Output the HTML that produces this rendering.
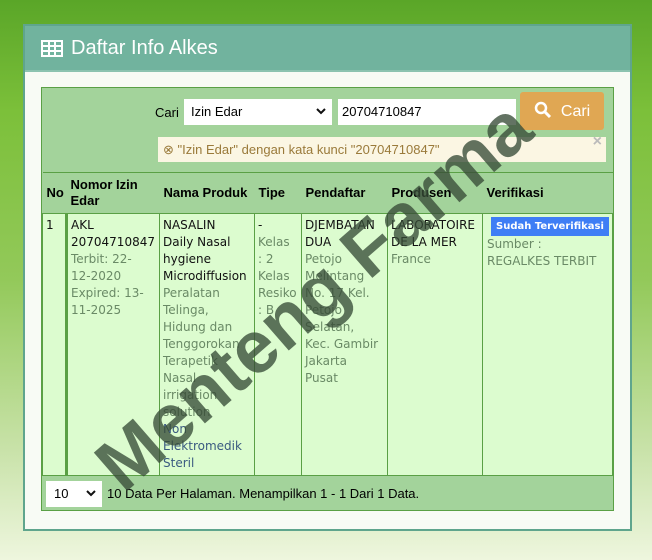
<!DOCTYPE html>
<html><head><meta charset="utf-8"><style>
*{box-sizing:border-box}
body{margin:0;width:652px;height:560px;overflow:hidden;position:relative;font-family:"Liberation Sans",sans-serif;
background:linear-gradient(180deg,#5aa628 0%,#7cc03a 20%,#93c95a 50%,#c8e2a8 80%,#eef6de 100%);}
.panel{position:absolute;left:23px;top:24px;width:609px;height:507px;background:#f8fbf5;border:2px solid #5fa58d;}
.hd{height:46px;background:#71b39e;color:#fff;font-size:20px;padding:11px 0 0 16px;border-bottom:2px solid #8cc3b0}
.hd svg{vertical-align:-3px;margin-right:8px}
.box{position:absolute;left:16px;top:61px;width:573px;height:424px;border:1px solid #5aa045;background:#a3d39b}
.cell{position:absolute;font-size:12px;}
table{position:absolute;left:0;top:84px;width:571px;border-collapse:collapse;table-layout:fixed}
th{font-size:13px;text-align:left;font-weight:bold;padding:2px 4px;height:41px;border-top:1px solid #5aa045;line-height:16px}
td{background:#dcfccf;vertical-align:top;font-family:"DejaVu Sans",sans-serif;font-size:12px;line-height:17px;padding:3px 3px;border:1px solid #5aa045;color:#111;height:262px;white-space:nowrap;overflow:hidden}
.g{color:#6a8a66}
.wm{position:absolute;left:132px;top:428px;font:bold 74px/76px "Liberation Sans",sans-serif;color:rgba(55,75,55,0.78);transform:rotate(-41deg);transform-origin:0 100%;white-space:nowrap}
.chev{position:absolute;right:6px;top:9px}
</style></head><body>
<div class="panel">
<div class="hd"><svg width="22" height="17" viewBox="0 0 22 17"><rect x="1" y="1" width="20" height="15" fill="none" stroke="#fff" stroke-width="2"/><path d="M1 6h20M1 11h20M8 1v15M14 1v15" stroke="#fff" stroke-width="2"/></svg>Daftar Info Alkes</div>
<div class="box">
<div class="cell" style="left:113px;top:17px;font-size:13px">Cari</div>
<div class="cell" style="left:142px;top:11px;width:148px;height:26px;background:#fff;font-size:13px;padding:5px 7px">Izin Edar<svg class="chev" width="10" height="7" viewBox="0 0 10 7"><path d="M1 1l4 4 4-4" fill="none" stroke="#111" stroke-width="2"/></svg></div>
<div class="cell" style="left:296px;top:11px;width:178px;height:26px;background:#fff;font-size:13px;padding:5px 4px">20704710847</div>
<div class="cell" style="left:478px;top:4px;width:84px;height:38px;background:#e0a753;border-radius:3px;color:#fff;font-size:16px;padding:9px 0 0 14px"><svg width="18" height="18" viewBox="0 0 18 18" style="vertical-align:-3px"><circle cx="7" cy="7" r="5" fill="none" stroke="#fff" stroke-width="2.5"/><path d="M11 11l5 5" stroke="#fff" stroke-width="3"/></svg> &nbsp;Cari</div>
<div class="cell" style="left:116px;top:49px;width:448px;height:25px;background:#fbf6e3;color:#9a7a3a;font-size:13px;padding:5px 5px">⊗ "Izin Edar" dengan kata kunci "20704710847"<span style="position:absolute;right:4px;top:-4px;color:#bbb;font-size:16px;font-weight:bold">×</span></div>
<table>
<colgroup><col style="width:24px"><col style="width:93px"><col style="width:95px"><col style="width:47px"><col style="width:86px"><col style="width:95px"><col></colgroup>
<tr><th>No</th><th>Nomor Izin Edar</th><th>Nama Produk</th><th>Tipe</th><th>Pendaftar</th><th>Produsen</th><th>Verifikasi</th></tr>
<tr><td style="border-right-width:3px">1</td><td>AKL<br>20704710847<br><span class="g">Terbit: 22-<br>12-2020<br>Expired: 13-<br>11-2025</span></td><td>NASALIN<br>Daily Nasal<br>hygiene<br>Microdiffusion<br><span class="g">Peralatan<br>Telinga,<br>Hidung dan<br>Tenggorokan<br>Terapetik<br>Nasal<br>irrigation<br>solution</span><br><span style="color:#3a5a80">Non<br>Elektromedik<br>Steril</span></td><td>-<br><span class="g">Kelas<br>: 2<br>Kelas<br>Resiko<br>: B</span></td><td>DJEMBATAN<br>DUA<br><span class="g">Petojo<br>Melintang<br>No. 17 Kel.<br>Petojo<br>Selatan,<br>Kec. Gambir<br>Jakarta<br>Pusat</span></td><td>LABORATOIRE<br>DE LA MER<br><span class="g">France</span></td><td style="padding-left:4px"><span style="display:inline-block;background:#3f7ef5;color:#fff;font-size:10px;padding:1px 5px;font-weight:bold;margin-left:4px">Sudah Terverifikasi</span><br><span class="g">Sumber :<br>REGALKES TERBIT</span></td></tr>
</table>
<div class="cell" style="left:4px;top:393px;width:56px;height:26px;background:#fff;font-size:13px;padding:5px 8px">10<svg class="chev" width="10" height="7" viewBox="0 0 10 7"><path d="M1 1l4 4 4-4" fill="none" stroke="#111" stroke-width="2"/></svg></div>
<div class="cell" style="left:65px;top:398px;font-size:13px">10 Data Per Halaman. Menampilkan 1 - 1 Dari 1 Data.</div>
</div>
</div>
<div class="wm">Menteng Farma</div>
</body></html>
